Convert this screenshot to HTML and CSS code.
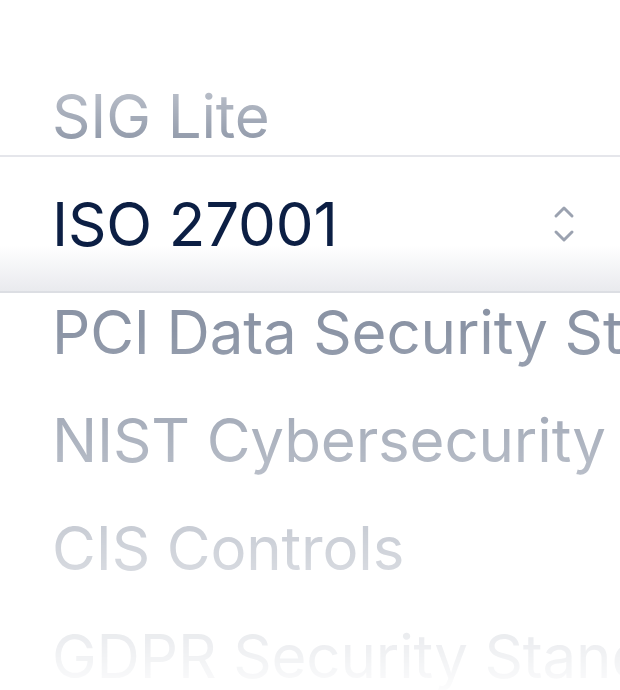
FILE: index.html
```html
<!DOCTYPE html>
<html lang="en">
<head>
<meta charset="utf-8">
<title>Framework picker</title>
<link rel="stylesheet" href="styles.css">
</head>
<body>
<div class="picker">
  <ul class="list">
    <li class="row"><span class="label">SIG Lite</span></li>
    <li class="row selected">
      <span class="label">ISO 27001</span>
      <svg class="chevrons" width="24" height="40" viewBox="0 0 24 40" aria-hidden="true">
        <path d="M4 12 L12 4 L20 12" />
        <path d="M4 28 L12 36 L20 28" />
      </svg>
    </li>
    <li class="row"><span class="label">PCI Data Security Standard</span></li>
    <li class="row"><span class="label">NIST Cybersecurity Framework</span></li>
    <li class="row"><span class="label">CIS Controls</span></li>
    <li class="row"><span class="label">GDPR Security Standard</span></li>
  </ul>
</div>
</body>
</html>
```
FILE: styles.css
```css
html, body {
  margin: 0;
  padding: 0;
  background: #ffffff;
}

.picker {
  width: 620px;
  height: 690px;
  overflow: hidden;
  font-family: Inter, "Noto Sans", sans-serif;
}

.list {
  list-style: none;
  margin: 0;
  padding: 62px 0 0 0;
  display: flex;
  flex-direction: column;
  -webkit-mask-image: linear-gradient(to bottom, rgba(0,0,0,0) 0px, #000 150px, #000 330px, rgba(0,0,0,0) 700px);
  mask-image: linear-gradient(to bottom, rgba(0,0,0,0) 0px, #000 150px, #000 330px, rgba(0,0,0,0) 700px);
}

.row {
  height: 108px;
  display: flex;
  align-items: center;
  padding-left: 52px;
  font-size: 60px;
  color: #8b94a5;
  white-space: nowrap;
  letter-spacing: -0.15px;
  overflow: hidden;
}

.label {
  flex: 0 0 auto;
}

.row.selected {
  height: 138px;
  margin: -15px 0;
  box-sizing: border-box;
  border-top: 2px solid #e5e6eb;
  border-bottom: 2px solid #dcdee3;
  background: linear-gradient(to bottom, #ffffff 0%, #ffffff 66%, #e9eaee 100%);
  color: #0c1f44;
  justify-content: space-between;
  padding-right: 44px;
}

.chevrons {
  fill: none;
  stroke: #9ba2b0;
  stroke-width: 3;
  stroke-linecap: round;
  stroke-linejoin: round;
}
```
